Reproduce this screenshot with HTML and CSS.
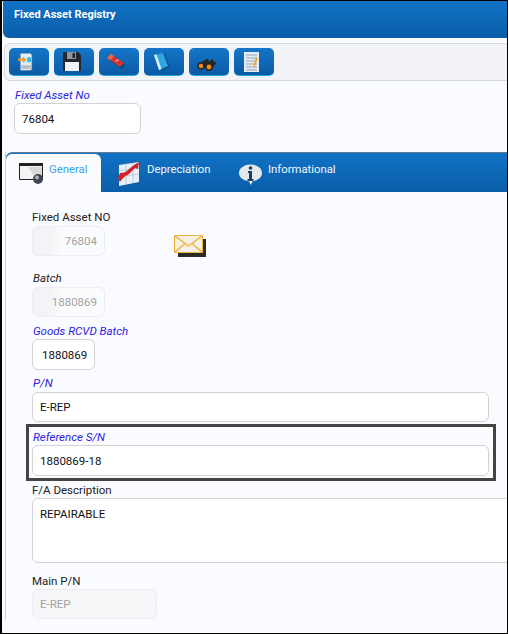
FILE: index.html
```html
<!DOCTYPE html>
<html lang="en">
  <head>
    <meta charset="UTF-8" />
    <title>Fixed Asset Registry</title>
    <link rel="stylesheet" href="styles.css">
  </head>
  <body>
    <div class="frame">
      <!-- Header -->
      <div class="page-header">Fixed Asset Registry</div>

      <!-- Toolbar -->
      <div class="toolbar">
        <button class="tool-btn tool-transfer" title="Transfer">
          <svg width="15" height="19" viewBox="0 0 24 26" preserveAspectRatio="none">
            <path d="M4 2h16l2 2v20l-2 1H4z" fill="#e8edf2" stroke="#9aa7b2" stroke-width=".6"/>
            <path d="M5 18h16v5H5z" fill="#b4bfc9"/>
            <path d="M5 7h16v8H5z" fill="#d5e6ee"/>
            <path d="M0 9h8V6l5 4.500-5 4.500v-3H0z" fill="#f39a1e"/>
            <circle cx="18" cy="10.500" r="3.500" fill="#35b4dc"/>
          </svg>
        </button>
        <button class="tool-btn" title="Save">
          <svg width="18" height="19" viewBox="0 0 18 19">
            <path d="M0 0h15l3 3v16H0z" fill="#23272c"/>
            <path d="M4 0h9v7H4z" fill="#8d969e"/>
            <path d="M9.500 1h2.500v5H9.500z" fill="#23272c"/>
            <path d="M2 10h14v9H2z" fill="#eef1f7"/>
          </svg>
        </button>
        <button class="tool-btn" title="Delete">
          <svg width="19" height="15" viewBox="0 0 19 15">
            <path d="M1 5l4-4 13 9-3 5z" fill="#123a60" opacity=".7"/>
            <path d="M0 4l4-4 13 9-4 4z" fill="#d8322f"/>
            <path d="M0 4l4-4 3 2-4 4z" fill="#ee6a55"/>
            <path d="M8 7l3-2 1 1-3 2z" fill="#f4a79a"/>
          </svg>
        </button>
        <button class="tool-btn" title="Notes">
          <svg width="16" height="18" viewBox="0 0 16 18">
            <path d="M2 2l9-2 5 14-9 4z" fill="#0d3f6a" opacity=".5"/>
            <path d="M0 2l9-2 5 13-9 4z" fill="#2ea6e6"/>
            <path d="M0 2l2.500-.6 5 14.600-2.500 1z" fill="#d6eefa"/>
          </svg>
        </button>
        <button class="tool-btn tool-search" title="Search">
          <svg width="20" height="14" viewBox="0 0 20 14">
            <path d="M4 9L12 4M12 10l5-6" stroke="#25272b" stroke-width="6"/>
            <circle cx="4" cy="9" r="3.800" fill="#25272b"/>
            <circle cx="4" cy="9" r="2.200" fill="#f08a1c"/>
            <circle cx="12" cy="10" r="4" fill="#25272b"/>
            <circle cx="12" cy="10" r="2.400" fill="#f08a1c"/>
          </svg>
        </button>
        <button class="tool-btn" title="Document">
          <svg width="16" height="20" viewBox="0 0 16 20">
            <path d="M0 0h15v20H0z" fill="#e6ecf5"/>
            <path d="M2 3h11M2 6h11M2 9h11M2 12h11M2 15h11M2 18h11" stroke="#97a4b5" stroke-width="1"/>
            <path d="M12 5l2 1-3 8-2 1z" fill="#e9a83a"/>
          </svg>
        </button>
      </div>

      <!-- Asset number -->
      <div class="asset-no">
        <label class="field-label link">Fixed Asset No</label>
        <input class="field-input asset-no-input" value="76804">
      </div>

      <!-- Tabs -->
      <div class="tab-panel">
        <div class="tab-bar">
          <div class="tab active">
            <svg width="25" height="21" viewBox="0 0 25 21">
              <path d="M.5.500h23v16H.5z" fill="#f4f4f4" stroke="#222"/>
              <path d="M0 0h24v3H0z" fill="#222"/>
              <path d="M9 4l8 12h6V4z" fill="#d8d8d8"/>
              <circle cx="19" cy="16" r="5" fill="#3d4650"/>
              <circle cx="18" cy="14.500" r="2" fill="#aab3bb"/>
            </svg>
            <span class="tab-text">General</span>
          </div>
          <div class="tab tab-dep">
            <svg width="22" height="24" viewBox="0 0 22 24">
              <path d="M1 3l20-3v20l-20 4z" fill="#e9eff7"/>
              <path d="M1 9l20-3M1 15l20-3M8 2v20M15 1v20" stroke="#aebfd6" stroke-width=".7"/>
              <path d="M0 16l2-5c4 0 6-1 9-4l5-4 5-3-1 7-3-1-6 6c-3 2-6 3-9 8z" fill="#d3222a"/>
            </svg>
            <span class="tab-text">Depreciation</span>
          </div>
          <div class="tab tab-info">
            <svg width="23" height="23" viewBox="0 0 23 23">
              <ellipse cx="11.500" cy="11" rx="11.500" ry="8.500" fill="#e4e9ee"/>
              <path d="M9 18l5 0-2 5z" fill="#e4e9ee"/>
              <circle cx="11.500" cy="6" r="1.800" fill="#1f3f63"/>
              <path d="M9 9h4v8h1.500v2h-6v-2H10v-6H9z" fill="#1f3f63"/>
            </svg>
            <span class="tab-text">Informational</span>
          </div>
        </div>

        <div class="tab-body">
          <div class="field-row">
            <div class="field field-first">
              <label class="field-label">Fixed Asset NO</label>
              <input class="field-input locked num-wide" value="76804" readonly>
            </div>
            <svg class="mail-icon" width="32" height="22" viewBox="0 0 32 22">
              <path d="M4 4h28v18H4z" fill="#2b2a24"/>
              <path d="M.5.500h28v17H.5z" fill="#f6f1e4" stroke="#eeb13c"/>
              <path d="M1 1l13.500 10L28 1M1 17l10-8.500M28 17L18 8.500" fill="none" stroke="#eeb13c" stroke-width="1.400"/>
            </svg>
          </div>
          <div class="field field-batch">
            <label class="field-label italic">Batch</label>
            <input class="field-input locked num-wide" value="1880869" readonly>
          </div>
          <div class="field field-goods">
            <label class="field-label link">Goods RCVD Batch</label>
            <input class="field-input num-small" value="1880869">
          </div>
          <div class="field field-pn">
            <label class="field-label link">P/N</label>
            <input class="field-input wide" value="E-REP">
          </div>
          <div class="callout">
            <label class="field-label link">Reference S/N</label>
            <input class="field-input wide" value="1880869-18">
          </div>
          <div class="field field-desc">
            <label class="field-label">F/A Description</label>
            <textarea class="field-input desc">REPAIRABLE</textarea>
          </div>
          <div class="field field-main">
            <label class="field-label">Main P/N</label>
            <input class="field-input locked main-pn" value="E-REP" readonly>
          </div>
        </div>
      </div>
    </div>
  </body>
</html>
```

FILE: styles.css
```css
* {
  box-sizing: border-box;
}

body {
  margin: 0;
  background-color: #fff;
  font-family: Roboto, "Liberation Sans", sans-serif;
  font-size: 11.5px;
}

.frame {
  width: 508px;
  height: 634px;
  border: 1px solid #000;
  border-left-width: 2px;
  background-color: #fafbfe;
  overflow: hidden;
}

.page-header {
  height: 37px;
  margin-left: 1px;
  padding: 7px 0 0 11px;
  background: linear-gradient(#1272c6, #0a5ea8);
  border-bottom-left-radius: 6px;
  color: #fff;
  font-size: 11px;
  font-weight: 700;
  line-height: 14px;
}

.toolbar {
  display: flex;
  gap: 5px;
  height: 38px;
  margin: 5px -6px 0 2px;
  padding: 4px;
  border: 1px solid #d5d8dc;
  border-radius: 6px;
  background-color: #f1f3f6;
}

.tool-btn {
  display: flex;
  align-items: center;
  justify-content: center;
  width: 40px;
  height: 28px;
  padding: 0 5px 0 0;
  border: 0;
  border-bottom: 1px solid #29a3e0;
  border-radius: 5px;
  background: linear-gradient(#1576c9, #0a5aa4);
}

.tool-transfer {
  padding-right: 8px;
}

.tool-search {
  padding: 5px 4px 0 0;
}

.field-label {
  display: block;
  height: 14px;
  line-height: 14px;
  color: #222;
}

.link {
  padding-left: 1px;
  color: #2a22e6;
  font-style: italic;
}

.italic {
  padding-left: 1px;
  font-style: italic;
}

.field-input {
  display: block;
  height: 30px;
  padding: 0 7px;
  border: 1px solid #d2d2d2;
  border-radius: 6px;
  background-color: #fff;
  color: #111;
  font-family: inherit;
  font-size: 11.5px;
  outline: none;
}

.asset-no {
  margin: 7px 0 0 12px;
}

.asset-no .field-label {
  margin-bottom: 1px;
}

.asset-no-input {
  width: 127px;
  height: 31px;
}

.tab-panel {
  margin: 18px -2px 0 3px;
  border-left: 1px solid #d0d3d8;
}

.tab-bar {
  display: flex;
  height: 40px;
  background: linear-gradient(#1272c6, #0a5ea8);
  border-top: 1px solid #66798a;
  border-top-left-radius: 6px;
}

.tab {
  display: flex;
  align-items: flex-start;
  padding: 9px 0 0 4px;
  color: #f1f7fd;
  font-size: 11.3px;
}

.tab-text {
  margin-top: 1px;
  line-height: 14px;
}

.tab.active {
  gap: 5px;
  width: 95px;
  margin-top: 1px;
  padding: 8px 0 0 13px;
  background-color: #fafbfe;
  border-radius: 6px 6px 0 0;
  color: #38a3ea;
}

.tab.active svg {
  margin-top: 1px;
}

.tab-dep {
  gap: 7px;
  width: 121px;
  margin-left: 13px;
}

.tab-info {
  gap: 6px;
}

.tab-body {
  padding: 0 0 0 26px;
}

.field-row {
  display: flex;
  align-items: flex-end;
}

.mail-icon {
  margin: 0 0 -1px 64px;
}

.field .field-label {
  margin-bottom: 2px;
}

.field-first {
  margin-top: 18px;
}

.field-batch {
  margin-top: 15px;
}

.field-goods {
  margin-top: 7px;
}

.field-goods .field-label {
  margin-bottom: 1px;
}

.field-pn {
  margin-top: 6px;
}

.locked {
  background-color: #f5f6f8;
  border-color: #eceef1;
  color: #a2a2a2;
}

.num-wide {
  width: 73px;
  text-align: right;
  background: linear-gradient(90deg, #f3f4f6 0, #f3f4f6 25%, #fafbfc 40%);
}

.num-small {
  width: 63px;
  height: 31px;
  padding: 0 3px 0 9px;
}

.wide {
  width: 457px;
}

.callout {
  width: 470px;
  height: 57px;
  margin: 2px 0 0 -6px;
  padding: 0 0 0 3px;
  border: 3px solid #444;
}

.callout .field-label {
  margin: 3px 0 1px;
}

.callout .field-input {
  height: 31px;
}

.field-desc {
  margin-top: 2px;
}

.field-desc .field-label {
  margin-bottom: 1px;
}

.desc {
  width: 500px;
  height: 65px;
  padding-top: 8px;
  resize: none;
  overflow: hidden;
}

.field-main {
  margin-top: 11px;
}

.field-main .field-label {
  margin-bottom: 1px;
}

.main-pn {
  width: 125px;
}
```
